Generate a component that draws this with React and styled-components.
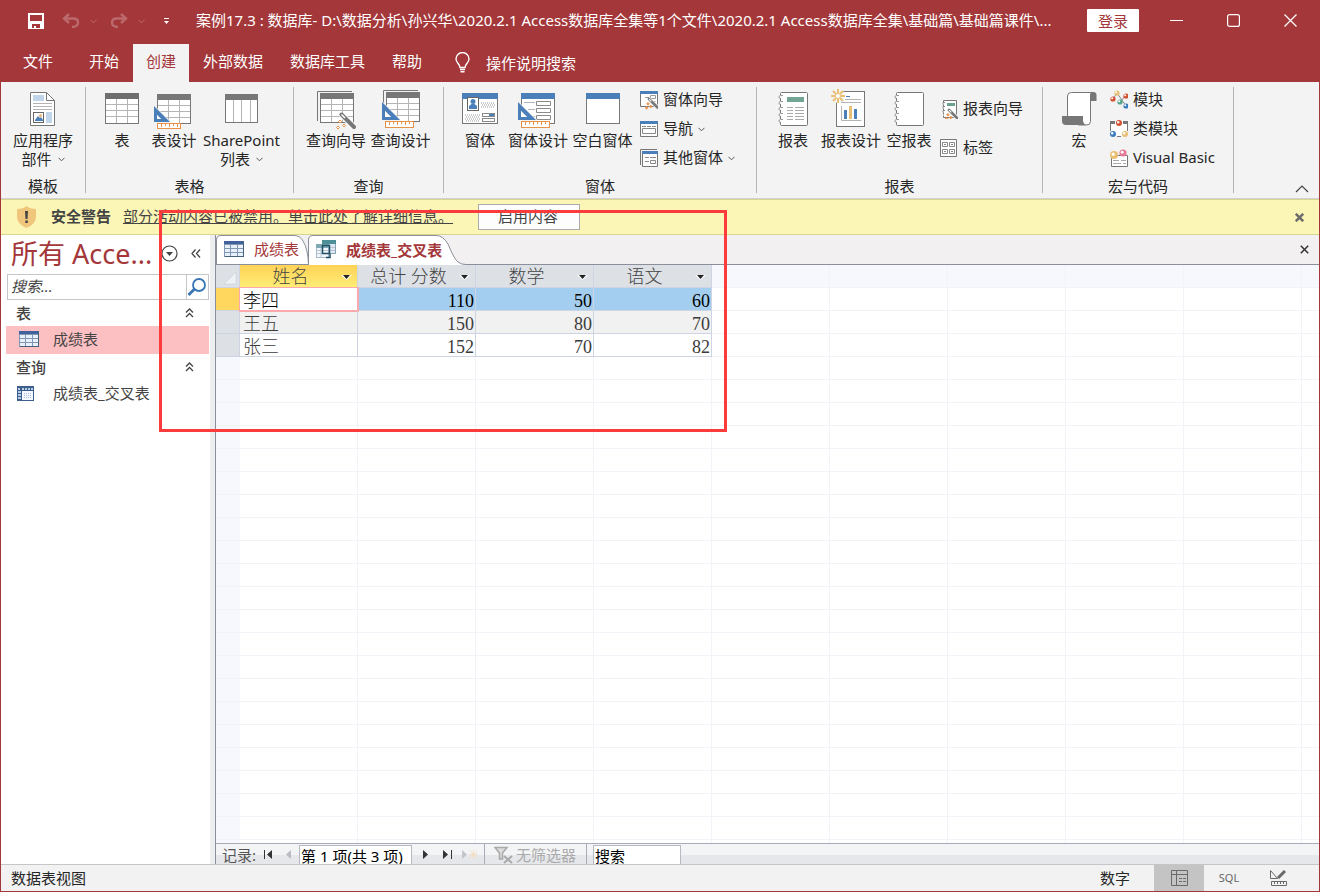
import React, { useState } from 'react';
import styled, { createGlobalStyle } from 'styled-components';

const GlobalStyle = createGlobalStyle`
  * {
    box-sizing: border-box;
  }
  body {
    margin: 0;
    font-family: 'Noto Sans', 'Noto Sans CJK SC', sans-serif;
    font-size: 15px;
    line-height: 20px;
    color: #262626;
  }
  button, input {
    font: inherit;
    color: inherit;
    margin: 0;
    padding: 0;
    border: none;
    background: none;
    border-radius: 0;
    outline: none;
  }
  svg {
    display: block;
    flex: none;
  }
`;

const Window = styled.div`
  position: relative;
  display: flex;
  flex-direction: column;
  height: 100vh;
  border: 1px solid #a4373a;
  border-top: none;
  background: #fff;
  overflow: hidden;
`;

const TitleBar = styled.header`
  display: flex;
  align-items: center;
  height: 44px;
  padding-left: 27px;
  background: #a4373a;
  color: #fff;
  flex: none;
`;

const QuickAccess = styled.div`
  display: flex;
  align-items: center;
  width: 168px;
  padding-bottom: 2px;
  flex: none;
`;

const QuickButton = styled.button`
  width: ${(p) => p.$w}px;
  height: 20px;
  opacity: ${(p) => (p.disabled ? 0.25 : 1)};
`;

const Title = styled.div`
  flex: 1;
  min-width: 0;
  white-space: nowrap;
  overflow: hidden;
  padding-bottom: 4px;
`;

const LoginButton = styled.button`
  width: 52px;
  height: 23px;
  margin: 0 9px 3px 17px;
  background: #fff;
  color: #a4373a;
  border-radius: 1px;
  line-height: 22px;
  flex: none;
`;

const WindowButton = styled.button`
  display: flex;
  align-items: center;
  justify-content: center;
  width: 57px;
  height: 40px;
  margin-bottom: 4px;
  flex: none;
`;

const TabStrip = styled.nav`
  display: flex;
  gap: 1px;
  height: 38px;
  padding-left: 9px;
  background: #a4373a;
  color: #fff;
  flex: none;
`;

const RibbonTab = styled.button`
  padding: 0 13px 4px;
  margin-right: ${(p) => (p.$file ? 9 : 0)}px;
  white-space: nowrap;
  background: ${(p) => (p.$active ? '#f3f3f3' : 'transparent')};
  color: ${(p) => (p.$active ? '#a4373a' : '#fff')};
`;

const TellMe = styled.button`
  display: flex;
  align-items: center;
  gap: 16px;
  margin-left: 19px;
  padding-bottom: 1px;
  white-space: nowrap;
`;

const Ribbon = styled.section`
  position: relative;
  display: flex;
  height: 117px;
  padding: 5px 0;
  background: #f3f3f3;
  border-bottom: 1px solid #d2d2d2;
  flex: none;
`;

const Group = styled.div`
  display: flex;
  flex-direction: column;
  padding: 0 10px;
  border-right: 1px solid #b5b5b5;
  flex: none;
`;

const GroupBody = styled.div`
  display: flex;
  align-items: flex-start;
  flex: 1;
`;

const GroupLabel = styled.div`
  text-align: center;
  line-height: 14px;
`;

const BigButton = styled.button`
  display: flex;
  flex-direction: column;
  align-items: center;
  width: ${(p) => p.$w}px;
  padding-top: 1px;
  line-height: 19px;
  white-space: nowrap;

  svg {
    margin-bottom: 1px;
  }
`;

const LabelLine = styled.span`
  display: flex;
  align-items: center;
  gap: 6px;

  svg {
    margin: 0;
  }
`;

const SmallColumn = styled.div`
  display: flex;
  flex-direction: column;
  width: ${(p) => p.$w}px;
  margin-left: 5px;
  padding-top: ${(p) => (p.$loose ? 9 : 0)}px;
  gap: ${(p) => (p.$loose ? 13 : 3)}px;
`;

const SmallButton = styled.button`
  display: flex;
  align-items: center;
  gap: 5px;
  height: 26px;
  padding-bottom: 2px;
  white-space: nowrap;

  svg {
    margin-top: 2px;
  }
`;

const CollapseButton = styled.button`
  margin: auto 10px 0 auto;
`;

const WarningBar = styled.section`
  display: flex;
  align-items: center;
  height: 36px;
  padding: 0 15px 0 16px;
  background: #fcf6b6;
  border-top: 1px solid #d8d593;
  border-bottom: 1px solid #d8d593;
  color: #444;
  white-space: nowrap;
  flex: none;
`;

const WarningTitle = styled.strong`
  margin: 0 12px 0 15px;
  padding-bottom: 2px;
`;

const WarningLink = styled.a`
  padding-bottom: 2px;
  color: #444;
  text-decoration: underline;
`;

const EnableButton = styled.button`
  width: 102px;
  height: 26px;
  margin-left: 25px;
  padding: 0 2px 2px 0;
  border: 1px solid #ababab;
  background: #fdfdfd;
`;

const CloseButton = styled.button`
  margin-left: auto;
`;

const Main = styled.main`
  display: flex;
  flex: 1;
  min-height: 0;
`;

const NavPane = styled.aside`
  width: 215px;
  padding-left: 5px;
  border-right: 1px solid #8b8f9b;
  box-shadow: inset -5px 0 0 #eceef0;
  color: #444;
  flex: none;
`;

const NavHeader = styled.div`
  display: flex;
  align-items: center;
  height: 39px;
  padding: 0 14px 2px 5px;
`;

const NavTitle = styled.h2`
  width: 150px;
  margin: 0;
  font-size: 27px;
  font-weight: 400;
  line-height: 36px;
  color: #a4373a;
  white-space: nowrap;
`;

const NavCollapse = styled.button`
  margin-left: auto;
`;

const NavSearch = styled.div`
  display: flex;
  width: 202px;
  height: 26px;
  margin-left: 1px;
  border: 1px solid #c6c6c6;

  input {
    flex: 1;
    min-width: 0;
    padding: 0 0 2px 3px;
    font-style: italic;
  }
  input::placeholder {
    color: #444;
    opacity: 1;
  }
  button {
    width: 22px;
    border-left: 1px solid #c6c6c6;
  }
`;

const NavGroup = styled.button`
  display: flex;
  align-items: center;
  justify-content: space-between;
  width: 203px;
  height: 26px;
  padding: 0 15px 0 10px;
  font-weight: 500;
`;

const NavItem = styled.button`
  display: flex;
  align-items: center;
  width: 203px;
  height: 28px;
  padding-bottom: 2px;
  background: ${(p) => (p.$active ? '#fdc0c2' : 'transparent')};

  svg {
    margin: 0 ${(p) => (p.$query ? 19 : 14)}px 0 ${(p) => (p.$query ? 11 : 13)}px;
  }
`;

const Document = styled.section`
  display: flex;
  flex-direction: column;
  flex: 1;
  min-width: 0;
`;

const DocTabs = styled.div`
  display: flex;
  height: 30px;
  padding-right: 10px;
  background: #f2f0f0;
  border-bottom: 1px solid #8b8f9b;
  flex: none;
`;

const DocTab = styled.button`
  position: relative;
  display: flex;
  align-items: center;
  gap: 10px;
  height: ${(p) => (p.$active ? 30 : 29)}px;
  width: ${(p) => (p.$active ? 158 : 92)}px;
  padding: 0 0 1px 8px;
  color: #a4373a;
  font-weight: ${(p) => (p.$active ? 700 : 400)};
  white-space: nowrap;
  z-index: ${(p) => (p.$active ? 1 : 0)};
`;

const TabShape = styled.svg`
  position: absolute;
  left: 0;
  top: 0;
  z-index: -1;
`;

const Sheet = styled.div`
  flex: 1;
  min-height: 0;
  overflow: hidden;
  background:
    repeating-linear-gradient(to bottom, transparent 0 22px, #f2f3f8 22px 23px),
    repeating-linear-gradient(to right, transparent 0 117px, #f2f3f8 117px 118px) 24px 0,
    linear-gradient(#f7f7fe, #f7f7fe) 0 0 / 24px 100% no-repeat,
    linear-gradient(#f7f7fe, #f7f7fe) 0 0 / 100% 23px no-repeat,
    #fff;
`;

const Table = styled.table`
  table-layout: fixed;
  width: 496px;
  border-collapse: separate;
  border-spacing: 0;
  font-family: 'Liberation Serif', 'Noto Sans CJK SC', serif;
  font-size: 18px;

  th, td {
    height: 23px;
    padding: 0;
    font-weight: 300;
    border-right: 1px solid #ced4e2;
    border-bottom: 1px solid #ced4e2;
    white-space: nowrap;
  }
`;

const HeadCell = styled.th`
  background: ${(p) => (p.$active ? 'linear-gradient(#ffd257, #ffed75)' : '#dde1e6')};
  color: #444;
`;

const HeadInner = styled.div`
  display: flex;
  align-items: center;
  padding: 2px 5px 0 0;
  height: 22px;

  span {
    flex: 1;
    text-align: center;
  }
`;

const SelectorHead = styled.th`
  width: 24px;
  background: #dde1e6;

  svg {
    margin: 4px 0 0 8px;
  }
`;

const RowSelector = styled.th`
  background: ${(p) => (p.$active ? '#ffd75e' : '#dde1e6')};
`;

const DataRow = styled.tr`
  line-height: 18px;
  color: ${(p) => (p.$active ? '#000' : '#3c3c3c')};
  background: ${(p) => (p.$active ? '#a4cef0' : p.$alt ? '#f1f1f1' : '#fff')};
`;

const NameCell = styled.td`
  && {
    position: relative;
    padding: 3px 0 0 3px;
    background: ${(p) => (p.$active ? '#fff' : 'transparent')};
    border-color: ${(p) => (p.$active ? '#fca9ae' : '#ced4e2')};
    box-shadow: ${(p) => (p.$active ? '0 0 0 1px #fca9ae' : 'none')};
  }
`;

const NumberCell = styled.td`
  && {
    padding: 4px 1px 0 0;
    text-align: right;
  }
`;

const RecordBar = styled.div`
  display: flex;
  align-items: center;
  height: 21px;
  border-top: 1px solid #a9acb6;
  background: linear-gradient(#f3f4f6 0 11px, #e5e7ea 11px);
  color: #555;
  white-space: nowrap;
  overflow: hidden;
  flex: none;
`;

const RecordLabel = styled.label`
  width: 43px;
  padding: 1px 0 0 6px;
`;

const RecordButton = styled.button`
  display: flex;
  justify-content: center;
  width: ${(p) => p.$w}px;
`;

const RecordInput = styled.input`
  width: ${(p) => p.$w}px;
  height: 20px;
  margin: 1px 0 0 ${(p) => p.$gap}px;
  padding: 2px 0 0 1px;
  border: 1px solid #b7bac1;
  border-bottom: none;
  background: #fff;
  color: #000;

  &::placeholder {
    color: #000;
    opacity: 1;
  }
`;

const FilterButton = styled.button`
  display: flex;
  align-items: center;
  gap: 3px;
  width: 103px;
  height: 20px;
  padding: 1px 0 0 9px;
  border-left: 1px solid #a9acb6;
  border-right: 1px solid #a9acb6;
  color: #aaa;
`;

const StatusBar = styled.footer`
  display: flex;
  align-items: center;
  height: 27px;
  padding: 0 15px 0 10px;
  border-top: 1px solid #c6c6c6;
  background: #f2f2f2;
  flex: none;
`;

const StatusMode = styled.span`
  margin: 0 24px 0 auto;
`;

const ViewButton = styled.button`
  display: flex;
  align-items: center;
  justify-content: center;
  width: 50px;
  height: 26px;
  font-size: 11px;
  color: #666;
  background: ${(p) => (p.$active ? '#c4c4c4' : 'transparent')};
`;

const Highlight = styled.div`
  position: absolute;
  left: 158px;
  top: 210px;
  width: 568px;
  height: 222px;
  border: 3px solid #fc3c3c;
  pointer-events: none;
  z-index: 5;
`;

const GRAY = '#777';
const BLUE = '#4a7fba';
const ORANGE = '#e8914a';

const Chevron = ({ color = '#555' }) => (
  <svg width="7" height="5" viewBox="0 0 7 5" fill="none" stroke={color}>
    <path d="M.5 .8L3.5 3.8L6.5 .8" />
  </svg>
);

const Big = ({ children }) => (
  <svg width="40" height="42" viewBox="0 0 40 42" fill="none">
    {children}
  </svg>
);

const Small = ({ children }) => (
  <svg width="18" height="20" viewBox="0 0 18 20" fill="none">
    {children}
  </svg>
);

const Grid = ({ x, y, w = 33, h = 29, head = GRAY }) => (
  <>
    <rect x={x + 0.5} y={y + 0.5} width={w} height={h} fill="#fff" stroke={GRAY} />
    <path
      stroke="#b4b4b4"
      d={`M${x + 11.5} ${y + 6}v${h - 6}M${x + 22.5} ${y + 6}v${h - 6}M${x + 1} ${y + 11.5}h${w - 1}M${x + 1} ${y + 17.5}h${w - 1}M${x + 1} ${y + 23.5}h${w - 1}`}
    />
    <rect x={x} y={y} width={w + 1} height="6" fill={head} />
  </>
);

const SetSquare = ({ x, y, s = 18, ruler = 28, rh = 6 }) => (
  <>
    <path d={`M${x - 1} ${y - 2}l${s + 3} ${s + 3}h-${s + 3}z`} fill="#f3f3f3" />
    <path
      d={`M${x} ${y}v${s}h${s}zM${x + 3} ${y + 9}l${s - 12} ${s - 12}h-${s - 12}z`}
      fill={BLUE}
      fillRule="evenodd"
    />
    <path d={`M${x + 3} ${y + 9}l${s - 12} ${s - 12}h-${s - 12}z`} fill="#fff" />
    <rect x={x + 3.5} y={y + s + 1.5} width={ruler} height={rh} fill="#fff" stroke={ORANGE} />
    <path
      stroke={ORANGE}
      d={`M${x + 7.5} ${y + s + 2}v3m4-3v2m4-2v3m4-3v2m4-2v3${ruler > 25 ? 'm4-3v2' : ''}`}
    />
  </>
);

const Wand = ({ x, y, s = 1 }) => (
  <g transform={`translate(${x} ${y}) scale(${s})`}>
    <path d="M1.5 1.5L14 14" stroke="#fff" strokeWidth="6" />
    <path d="M1.500 1.500L14 14" stroke="#777" strokeWidth="4" strokeLinecap="round" />
    <path d="M1.500 1.500l3.500 3.500" stroke="#fff" strokeWidth="1.500" />
    <path
      d="M0 7l1.500 1.500L0 10l-1.500-1.500zM4 11l1.500 1.500L4 14l-1.500-1.500zM-2 13l1.500 1.500L-2 16l-1.500-1.500z"
      stroke={ORANGE}
      fill="#fff"
      strokeWidth={s < 1 ? 1.6 : 1}
    />
  </g>
);

const AppPartsIcon = () => (
  <Big>
    <path d="M7.5 4.5h16l8 8v25h-24z" fill="#fff" stroke={GRAY} />
    <path d="M23.5 4.5v8h8" stroke={GRAY} />
    <path d="M10 7h11v6H10zM23 24h6v11h-6z" fill="#c0d4ea" />
    <path d="M10 15.5h19M10 18.5h19M10 21.5h19" stroke="#b4b4b4" />
    <rect x="10.5" y="24.5" width="10" height="10" stroke="#666" fill="#fff" />
    <path d="M12 33v-1l3-4 2 2 1-1 2 3v1z" fill={BLUE} />
    <circle cx="17.5" cy="27.5" r="1.5" fill="#efb46d" />
  </Big>
);

const TableIcon = () => (
  <Big>
    <Grid x={3} y={5} h={30} head="#6e6e6e" />
  </Big>
);

const TableDesignIcon = () => (
  <Big>
    <Grid x={3} y={6} />
    <SetSquare x={0} y={18} s={16} ruler={23} rh={5} />
  </Big>
);

const SharePointIcon = () => (
  <Big>
    <rect x="3.5" y="6.5" width="32" height="28" fill="#fff" stroke={GRAY} />
    <path d="M11.5 12v22M19.5 12v22M28.5 12v22" stroke="#b4b4b4" />
    <path d="M3 6h33v6H3z" fill={GRAY} />
  </Big>
);

const QueryWizardIcon = () => (
  <Big>
    <path d="M1.5 33V3.5H36" stroke={GRAY} />
    <Grid x={4} y={5} />
    <Wand x={24} y={25} />
  </Big>
);

const QueryDesignIcon = () => (
  <Big>
    <path d="M2.5 32V2.5H37" stroke={GRAY} />
    <Grid x={5} y={4} />
    <SetSquare x={1} y={14} />
  </Big>
);

const FormFrame = ({ x, y, w = 33, h = 30 }) => (
  <>
    <rect x={x + 0.5} y={y + 0.5} width={w} height={h} fill="#fff" stroke={GRAY} />
    <rect x={x} y={y} width={w + 1} height="6" fill={BLUE} />
  </>
);

const FormIcon = () => (
  <Big>
    <FormFrame x={2} y={5} w={35} />
    <rect x="7.5" y="9.5" width="11" height="13" fill="#fff" stroke="#666" />
    <circle cx="13" cy="13.5" r="2.5" fill={BLUE} />
    <path d="M9 21v-3l2.5-2h3L17 18v3z" fill={BLUE} />
    <path d="M21 15h14M22 17h14M21 19h14M5 27h15M6 29h14M5 31h15M6 33h14" stroke="#999" strokeDasharray="1 1" />
    <rect x="22.5" y="25.5" width="12" height="3" stroke="#888" />
    <path d="M29 26h5v2h-5z" fill={BLUE} />
    <rect x="22.5" y="30.5" width="12" height="3" stroke="#888" />
  </Big>
);

const FormDesignIcon = () => (
  <Big>
    <FormFrame x={3} y={5} />
    <path d="M6 14.5h11M10 21.5h7M14 28.5h3" stroke="#b4b4b4" />
    <path d="M18.5 13.5h14v4h-14zM18.5 20.5h14v4h-14zM18.5 27.5h14v4h-14z" stroke="#8a8a8a" />
    <SetSquare x={0} y={14} />
  </Big>
);

const BlankFormIcon = () => (
  <Big>
    <FormFrame x={3} y={5} />
  </Big>
);

const Notebook = () => (
  <>
    <rect x="7.5" y="4.5" width="27" height="33" rx="1" fill="#fff" stroke={GRAY} />
    <path d="M7.5 7v3M7.5 13v3M7.5 19v3M7.5 25v3M7.5 31v3" stroke="#f3f3f3" strokeWidth="2" />
    <path d="M10 7.5H7.5a1 1 0 000 3M10 13.5H7.5a1 1 0 000 3M10 19.5H7.5a1 1 0 000 3M10 25.5H7.5a1 1 0 000 3M10 31.5H7.5a1 1 0 000 3" stroke="#999" />
  </>
);

const ReportIcon = () => (
  <Big>
    <Notebook />
    <path d="M14 9h17v5H14z" fill="#73a594" />
    <path d="M14 19.5h6M22 19.5h9M14 22.5h6M22 22.5h9M14 25.5h6M22 25.5h9M14 28.5h6M22 28.5h9M14 31.5h6M22 31.5h9" stroke="#aaa" />
  </Big>
);

const ReportDesignIcon = () => (
  <Big>
    <rect x="5.5" y="3.5" width="28" height="35" fill="#fff" stroke={GRAY} />
    <path d="M15 8.5h4" stroke={BLUE} />
    <path d="M14 11.5h16M10 14.5h20M10.5 18v14.500h20" stroke="#b4b4b4" />
    <path d="M13 22h3v9h-3zM23 21h3v10h-3z" fill={BLUE} />
    <path d="M18 18h3v13h-3z" fill="#e9bf73" />
    <circle cx="7" cy="8" r="7" fill="#f3f3f3" />
    <path d="M7 1v4M7 11v4M0 8h4M10 8h4M2 3l3 3M9 10l3 3M12 3L9 6M5 10l-3 3" stroke="#e9bf73" strokeWidth="2" />
    <circle cx="7" cy="8" r="2.500" stroke="#e9bf73" fill="#fff" />
  </Big>
);

const BlankReportIcon = () => (
  <Big>
    <Notebook />
  </Big>
);

const MacroIcon = () => (
  <Big>
    <path d="M8.5 31V8q0-3.500 4-3.500h22l-3 4v25q0 3.500-4 3.500H20z" fill="#fff" stroke={GRAY} />
    <path d="M31 13V7q0-3 3-3 3.500 0 3.500 3v6z" fill={GRAY} />
    <path d="M3 28h21v5q1 4 4 4H7q-4 0-4-4z" fill={GRAY} />
  </Big>
);

const FormWizardIcon = () => (
  <Small>
    <path d="M.5 1.500h17v15H.5z" fill="#fff" stroke={GRAY} />
    <path d="M0 1h18v3H0z" fill={BLUE} />
    <path d="M5 7.500h4M10.500 5.500h5v3h-5zM10.500 11.500h5" stroke="#999" />
    <Wand x={8} y={8} s={0.68} />
  </Small>
);

const NavigationIcon = () => (
  <Small>
    <path d="M.5 2.500h17v15H.5z" fill="#fff" stroke={GRAY} />
    <path d="M0 2h18v3H0z" fill={BLUE} />
    <path d="M2 7.500h4m1 0h4m1 0h4M2.500 9.500h13v5h-13z" stroke="#888" />
  </Small>
);

const MoreFormsIcon = () => (
  <Small>
    <path d="M.5 17V1.500H17" stroke={GRAY} />
    <path d="M2.500 3.500h15v15h-15z" fill="#fff" stroke={GRAY} />
    <path d="M2 3h16v3H2z" fill={BLUE} />
    <path d="M5 9.500h4m1 0h6M5 13.500h4M10.500 12.500h5v3h-5z" stroke="#888" />
  </Small>
);

const ReportWizardIcon = () => (
  <Small>
    <path d="M3.500 1.500h13v17h-13z" fill="#fff" stroke={GRAY} />
    <path d="M3 3.500v13" stroke="#f3f3f3" strokeWidth="2" strokeDasharray="2 2" />
    <path d="M5 3.500H3v2M5 7.500H3v2M5 11.500H3v2" stroke="#888" />
    <path d="M7 4h8v3H7z" fill="#69a38e" />
    <Wand x={8} y={10} s={0.68} />
  </Small>
);

const LabelsIcon = () => (
  <Small>
    <path d="M.5 1.500h16v17H.5z" fill="#fff" stroke={GRAY} />
    <path d="M2.500 4.500h5v4h-5zM9.500 4.500h5v4h-5zM2.500 11.500h5v4h-5zM9.500 11.500h5v4h-5z" stroke="#888" />
    <path d="M4 6.500h2M11 6.500h2M4 13.500h2M11 13.500h2" stroke="#888" />
  </Small>
);

const Bead = ({ x, y, c, r = 2.6 }) => (
  <>
    <circle cx={x} cy={y} r={r} fill={c} />
    <circle cx={x - 0.8} cy={y - 0.8} r={r * 0.4} fill="#fff" />
  </>
);

const ModuleIcon = () => (
  <Small>
    <path d="M3 9l4-6 9 13M10 12l6-7" stroke="#888" />
    <Bead x={7} y={3} c="#e9bf73" />
    <Bead x={3} y={9} c="#d4512f" />
    <Bead x={16} y={6} c="#d4512f" />
    <Bead x={10} y={12} c="#56a58a" />
    <Bead x={16} y={16} c="#3a7cbf" />
  </Small>
);

const ClassModuleIcon = () => (
  <Small>
    <path d="M1 3h16v14H1z" fill="#fff" />
    <path d="M.5 12V3h4M13 3h4.500v9M7 17.500h4" stroke={GRAY} />
    <path d="M0 2h5v3H0zM13 2h5v3h-5z" fill={GRAY} />
    <Bead x={9} y={4} c="#d4512f" r={3} />
    <Bead x={3} y={15} c="#3a7cbf" r={3} />
    <Bead x={15} y={15} c="#e9bf73" r={3} />
  </Small>
);

const VisualBasicIcon = () => (
  <Small>
    <path d="M1.500 7.500h16v11h-16z" fill="#fff" stroke={GRAY} />
    <path d="M3 12.500h6m2 0h5M3 15.500h8m2 0h3" stroke="#aaa" />
    <Bead x={4} y={7} c="#e9bf73" r={4} />
    <Bead x={13} y={5} c="#e37a93" r={3.6} />
  </Small>
);

const SheetIcon = () => (
  <svg width="20" height="16" viewBox="0 0 20 16">
    <path d="M0 0h20v16H0z" fill="#7f96b4" />
    <path d="M0 0h20v3H0z" fill="#40619b" />
    <path d="M19 1h1v15H1v-1h18z" fill="#46617c" />
    <path d="M1 4h5v3H1zM7 4h6v3H7zM14 4h5v3h-5zM1 8h5v3H1zM7 8h6v3H7zM14 8h5v3h-5zM1 12h5v3H1zM7 12h6v3H7zM14 12h5v3h-5z" fill="#e8f0fb" />
  </svg>
);

const CrosstabSmallIcon = () => (
  <svg width="17" height="15" viewBox="0 0 17 15">
    <path d="M0 0h17v15H0z" fill="#3d5f8c" />
    <path d="M5 5h11v9H5z" fill="#f4f8ff" />
    <path d="M5 2h2v2H5zM8 2h2v2H8zM11 2h2v2h-2zM14 2h2v2h-2zM1 5h3v2H1zM1 8h3v2H1zM1 11h3v2H1zM1 2h2v2H1z" fill="#b9cde9" />
    <path d="M7 7.500h8M7 9.500h8M7 11.500h8" stroke="#a8bbd8" strokeDasharray="1 1" />
  </svg>
);

const CrosstabIcon = () => (
  <svg width="20" height="19" viewBox="0 0 20 19">
    <path d="M6 0h14v14H6z" fill="#8aa3b3" />
    <path d="M7 4h12v9H7z" fill="#dfe9f3" />
    <path d="M6 0h14v4H6z" fill="#4d8f97" />
    <path d="M0 4h13v14H0z" fill="#a9bac9" />
    <path d="M1 8h11v9H1z" fill="#f2f6fb" />
    <path d="M0 4h13v4H0z" fill="#7fa9b5" />
    <path d="M1 10.500h11M1 13.500h11M5 8v9M14 7.500h5M14 10.500h5" stroke="#b7c6d6" />
    <path d="M6.500 5.500h7v8h-7z" fill="none" stroke="#1f4e63" strokeWidth="1.500" />
    <path d="M10 17.500h4V14" fill="none" stroke="#1f4e63" strokeWidth="1.500" />
  </svg>
);

const DoubleUp = () => (
  <svg width="9" height="10" viewBox="0 0 9 10" fill="none" stroke="#444" strokeWidth="1.3">
    <path d="M1 4.500L4.500 1L8 4.500M1 9L4.500 5.500L8 9" />
  </svg>
);

const Cross = ({ width = 1.5, color = '#333' }) => (
  <svg width="9" height="9" viewBox="0 0 9 9" stroke={color} strokeWidth={width}>
    <path d="M.8 .8L8.200 8.200M8.200 .8L.8 8.200" />
  </svg>
);

const Undo = ({ flip }) => (
  <svg width="18" height="16" viewBox="0 0 18 16" fill="none" stroke="#fff" strokeWidth="2.400">
    <path
      d="M7 1L2 5.500L7 10M2 5.500H11.500Q16 5.500 16 9.500Q16 14 10 14"
      transform={flip ? 'translate(18 0) scale(-1 1)' : undefined}
    />
  </svg>
);

const tabs = ['开始', '创建', '外部数据', '数据库工具', '帮助'];

const columns = ['姓名', '总计 分数', '数学', '语文'];

const rows = [
  { name: '李四', values: [110, 50, 60] },
  { name: '王五', values: [150, 80, 70] },
  { name: '张三', values: [152, 70, 82] },
];

const groups = [
  { label: '模板', big: [{ w: 64, icon: AppPartsIcon, lines: ['应用程序', '部件'], menu: true }] },
  {
    label: '表格',
    big: [
      { w: 52, icon: TableIcon, lines: ['表'] },
      { w: 52, icon: TableDesignIcon, lines: ['表设计'] },
      { w: 83, icon: SharePointIcon, lines: ['SharePoint', '列表'], menu: true },
    ],
  },
  {
    label: '查询',
    big: [
      { w: 64, icon: QueryWizardIcon, lines: ['查询向导'] },
      { w: 65, icon: QueryDesignIcon, lines: ['查询设计'] },
    ],
  },
  {
    label: '窗体',
    big: [
      { w: 52, icon: FormIcon, lines: ['窗体'] },
      { w: 64, icon: FormDesignIcon, lines: ['窗体设计'] },
      { w: 65, icon: BlankFormIcon, lines: ['空白窗体'] },
    ],
    smallWidth: 106,
    small: [
      { icon: FormWizardIcon, text: '窗体向导' },
      { icon: NavigationIcon, text: '导航', menu: true },
      { icon: MoreFormsIcon, text: '其他窗体', menu: true },
    ],
  },
  {
    label: '报表',
    big: [
      { w: 52, icon: ReportIcon, lines: ['报表'] },
      { w: 64, icon: ReportDesignIcon, lines: ['报表设计'] },
      { w: 52, icon: BlankReportIcon, lines: ['空报表'] },
    ],
    smallWidth: 92,
    loose: true,
    small: [
      { icon: ReportWizardIcon, text: '报表向导' },
      { icon: LabelsIcon, text: '标签' },
    ],
  },
  {
    label: '宏与代码',
    big: [{ w: 52, icon: MacroIcon, lines: ['宏'] }],
    smallWidth: 113,
    small: [
      { icon: ModuleIcon, text: '模块' },
      { icon: ClassModuleIcon, text: '类模块' },
      { icon: VisualBasicIcon, text: 'Visual Basic' },
    ],
  },
];

const RibbonGroup = ({ group }) => (
  <Group>
    <GroupBody>
      {group.big.map(({ w, icon: Icon, lines, menu }) => (
        <BigButton key={lines[0]} $w={w}>
          <Icon />
          {lines.map((line, i) => (
            <LabelLine key={line}>
              {line}
              {menu && i === lines.length - 1 && <Chevron />}
            </LabelLine>
          ))}
        </BigButton>
      ))}
      {group.small && (
        <SmallColumn $w={group.smallWidth} $loose={group.loose}>
          {group.small.map(({ icon: Icon, text, menu }) => (
            <SmallButton key={text}>
              <Icon />
              {text}
              {menu && <Chevron />}
            </SmallButton>
          ))}
        </SmallColumn>
      )}
    </GroupBody>
    <GroupLabel>{group.label}</GroupLabel>
  </Group>
);

const App = () => {
  const [activeTab, setActiveTab] = useState('创建');

  return (
    <Window>
      <GlobalStyle />
      <TitleBar>
        <QuickAccess>
          <QuickButton $w={34} aria-label="保存">
            <svg width="16" height="20" viewBox="0 0 16 20">
              <path fillRule="evenodd" fill="#fff" d="M0 2h16v16H0zM2 4v6h12V4zM4 13v4h2v-2h2v2h4v-4z" />
            </svg>
          </QuickButton>
          <QuickButton $w={28} disabled aria-label="撤消">
            <Undo />
          </QuickButton>
          <QuickButton $w={20} disabled aria-label="撤消选项">
            <Chevron color="#fff" />
          </QuickButton>
          <QuickButton $w={28} disabled aria-label="恢复">
            <Undo flip />
          </QuickButton>
          <QuickButton $w={25} disabled aria-label="恢复选项">
            <Chevron color="#fff" />
          </QuickButton>
          <QuickButton $w={8} aria-label="自定义快速访问工具栏">
            <svg width="7" height="8" viewBox="0 0 7 8">
              <path d="M1 1h5v1H1zM1 4h5L3.500 7z" fill="#fff" />
            </svg>
          </QuickButton>
        </QuickAccess>
        <Title>
          案例17.3 : 数据库- D:\数据分析\孙兴华\2020.2.1 Access数据库全集等1个文件\2020.2.1 Access数据库全集\基础篇\基础篇课件\...
        </Title>
        <LoginButton>登录</LoginButton>
        <WindowButton aria-label="最小化">
          <svg width="13" height="13" stroke="#fff">
            <path d="M0 6.500h13" />
          </svg>
        </WindowButton>
        <WindowButton aria-label="最大化">
          <svg width="13" height="13" fill="none" stroke="#fff" strokeWidth="1.200">
            <rect x=".6" y=".6" width="11.800" height="11.800" rx="2" />
          </svg>
        </WindowButton>
        <WindowButton aria-label="关闭">
          <svg width="13" height="13" stroke="#fff" strokeWidth="1.300">
            <path d="M.5 .5L12.500 12.500M12.500 .5L.5 12.500" />
          </svg>
        </WindowButton>
      </TitleBar>

      <TabStrip>
        <RibbonTab $file>文件</RibbonTab>
        {tabs.map((tab) => (
          <RibbonTab key={tab} $active={tab === activeTab} onClick={() => setActiveTab(tab)}>
            {tab}
          </RibbonTab>
        ))}
        <TellMe>
          <svg width="15" height="21" viewBox="0 0 15 21" fill="none" stroke="#fff" strokeWidth="1.400">
            <path d="M5 15.500C5 12 1 11 1 7a6.500 6.500 0 0113 0c0 4-4 5-4 8.500zM5 17.500h5M5.500 19.700h4" />
          </svg>
          操作说明搜索
        </TellMe>
      </TabStrip>

      <Ribbon>
        {groups.map((group) => (
          <RibbonGroup key={group.label} group={group} />
        ))}
        <CollapseButton aria-label="折叠功能区">
          <svg width="14" height="8" viewBox="0 0 14 8" fill="none" stroke="#444" strokeWidth="1.200">
            <path d="M1 7L7 1L13 7" />
          </svg>
        </CollapseButton>
      </Ribbon>

      <WarningBar>
        <svg width="19" height="22" viewBox="0 0 19 22">
          <path d="M9.500 0Q13 3 19 3V11Q19 18 9.500 22Q0 18 0 11V3Q6 3 9.500 0z" fill="#f0c67c" />
          <path d="M8 5h3l-.5 8h-2zM8.300 14.500h2.500v2.500H8.300z" fill="#444" />
        </svg>
        <WarningTitle>安全警告</WarningTitle>
        <WarningLink href="#details">部分活动内容已被禁用。单击此处了解详细信息。</WarningLink>
        <EnableButton>启用内容</EnableButton>
        <CloseButton aria-label="关闭消息栏">
          <Cross width={2.5} color="#6b6b6b" />
        </CloseButton>
      </WarningBar>

      <Main>
        <NavPane>
          <NavHeader>
            <NavTitle>所有 Acce...</NavTitle>
            <button aria-label="选择类别">
              <svg width="17" height="17" viewBox="0 0 17 17">
                <circle cx="8.500" cy="8.500" r="7.500" fill="none" stroke="#444" strokeWidth="1.200" />
                <path d="M5 7h7l-3.500 4z" fill="#444" />
              </svg>
            </button>
            <NavCollapse aria-label="折叠导航窗格">
              <svg width="10" height="9" viewBox="0 0 10 9" fill="none" stroke="#444" strokeWidth="1.300">
                <path d="M4.500 .5L1 4.500L4.500 8.500M9 .5L5.500 4.500L9 8.500" />
              </svg>
            </NavCollapse>
          </NavHeader>
          <NavSearch>
            <input aria-label="搜索对象" placeholder="搜索..." />
            <button aria-label="搜索">
              <svg width="20" height="20" viewBox="0 0 20 20" fill="none" stroke="#3a76b5">
                <circle cx="12" cy="8" r="6" strokeWidth="1.800" />
                <path d="M7.500 12L1.500 18" strokeWidth="2.800" />
              </svg>
            </button>
          </NavSearch>
          <NavGroup>
            表
            <DoubleUp />
          </NavGroup>
          <NavItem $active>
            <SheetIcon />
            成绩表
          </NavItem>
          <NavGroup>
            查询
            <DoubleUp />
          </NavGroup>
          <NavItem $query>
            <CrosstabSmallIcon />
            成绩表_交叉表
          </NavItem>
        </NavPane>

        <Document>
          <DocTabs>
            <DocTab>
              <TabShape width="93" height="29" fill="#fff" stroke="#8b8f9b">
                <path d="M.5 30V5Q.5 .5 5 .5H78Q84 .5 87 6Q92 14 92.500 30" />
              </TabShape>
              <SheetIcon />
              成绩表
            </DocTab>
            <DocTab $active>
              <TabShape width="158" height="30" fill="#fff" stroke="#8b8f9b">
                <path d="M.5 31V5Q.5 .5 5 .5H128Q135 .5 140 9Q146 24 150 27Q153 29.500 158 29.500V31" />
                <path d="M1 29.500H147" stroke="#fff" />
              </TabShape>
              <CrosstabIcon />
              成绩表_交叉表
            </DocTab>
            <CloseButton aria-label="关闭 成绩表_交叉表">
              <Cross />
            </CloseButton>
          </DocTabs>

          <Sheet>
            <Table>
              <thead>
                <tr>
                  <SelectorHead>
                    <svg width="13" height="13">
                      <path d="M12 0v12H0z" fill="#eef1f5" stroke="#c3c9d3" strokeWidth=".5" />
                    </svg>
                  </SelectorHead>
                  {columns.map((name, i) => (
                    <HeadCell key={name} $active={i === 0}>
                      <HeadInner>
                        <span>{name}</span>
                        <svg width="11" height="5" viewBox="0 0 11 5">
                          <path d="M0 0h11L5.500 5z" fill="#fff" />
                          <path d="M2 0h7L5.500 4z" fill="#222" />
                        </svg>
                      </HeadInner>
                    </HeadCell>
                  ))}
                </tr>
              </thead>
              <tbody>
                {rows.map((row, i) => (
                  <DataRow key={row.name} $active={i === 0} $alt={i === 1}>
                    <RowSelector $active={i === 0} />
                    <NameCell $active={i === 0}>{row.name}</NameCell>
                    {row.values.map((value, j) => (
                      <NumberCell key={j}>{value}</NumberCell>
                    ))}
                  </DataRow>
                ))}
              </tbody>
            </Table>
          </Sheet>

          <RecordBar>
            <RecordLabel htmlFor="record">记录:</RecordLabel>
            <RecordButton $w={18} aria-label="第一条记录">
              <svg width="9" height="9" fill="#333">
                <path d="M0 0h1v9H0zM8 0v9L3 4.500z" />
              </svg>
            </RecordButton>
            <RecordButton $w={22} disabled aria-label="上一条记录">
              <svg width="5" height="9" fill="#b9bcc2">
                <path d="M5 0v9L0 4.500z" />
              </svg>
            </RecordButton>
            <RecordInput id="record" $w={113} $gap={0} defaultValue="第 1 项(共 3 项)" />
            <RecordButton $w={26} aria-label="下一条记录">
              <svg width="5" height="9" fill="#333">
                <path d="M0 0v9L5 4.500z" />
              </svg>
            </RecordButton>
            <RecordButton $w={18} aria-label="尾记录">
              <svg width="9" height="9" fill="#333">
                <path d="M8 0h1v9H8zM0 0v9L5 4.500z" />
              </svg>
            </RecordButton>
            <RecordButton $w={28} disabled aria-label="新记录">
              <svg width="16" height="9" viewBox="0 0 16 9">
                <path d="M0 0v9L5 4.500z" fill="#c3c5ca" />
                <path d="M8 .5l7 8M15 .5l-7 8M7.500 4.500h8M11.500 .5v8" stroke="#f3dfc4" />
              </svg>
            </RecordButton>
            <FilterButton disabled>
              <svg width="19" height="18" viewBox="0 0 19 18" fill="none" stroke="#a9a9a9" strokeWidth="1.500">
                <path d="M1 1.500h12L8.500 7v6h-3V7z" fill="#ddd" />
                <path d="M10 10l8 7M18 10l-8 7" strokeWidth="2" />
              </svg>
              无筛选器
            </FilterButton>
            <RecordInput aria-label="搜索记录" $w={88} $gap={6} placeholder="搜索" />
          </RecordBar>
        </Document>
      </Main>

      <StatusBar>
        <span>数据表视图</span>
        <StatusMode>数字</StatusMode>
        <ViewButton $active aria-label="数据表视图">
          <svg width="17" height="16" fill="none" stroke="#6a6a6a">
            <path d="M.5 .5h16v15H.5zM.5 4.500h16M5.500 .5v15M8 8.500h3m1 0h3M8 11.500h3m1 0h3" />
          </svg>
        </ViewButton>
        <ViewButton>SQL</ViewButton>
        <ViewButton aria-label="设计视图">
          <svg width="18" height="17" viewBox="0 0 18 17" fill="none" stroke="#6a6a6a">
            <path d="M1.500 11.500h15v4h-15zM4.500 12v2m3-2v2m3-2v2m3-2v2M.5 8.500v-8l7 8z" />
            <path d="M8 8l7-7" strokeWidth="3" />
          </svg>
        </ViewButton>
      </StatusBar>
      <Highlight />
    </Window>
  );
};

export default App;
